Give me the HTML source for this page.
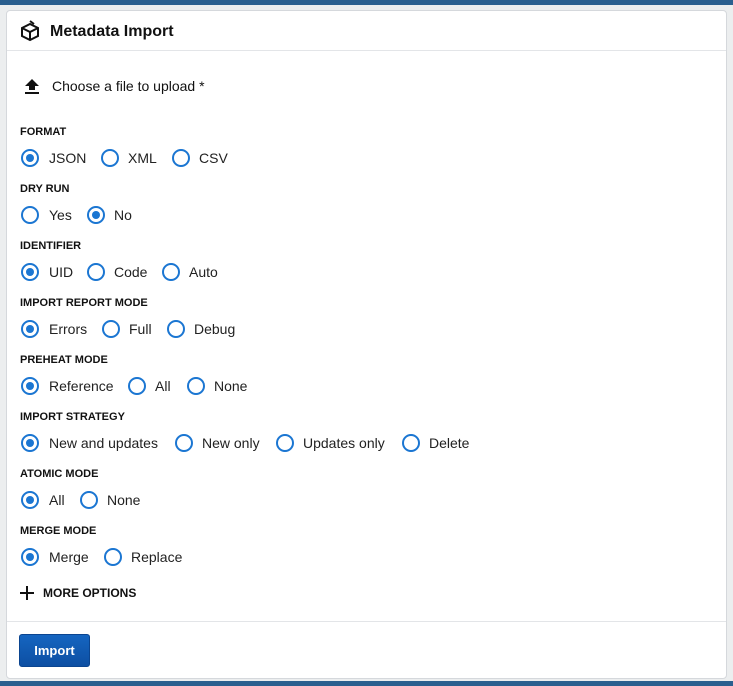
<!DOCTYPE html>
<html><head><style>
body{margin:0;width:733px;height:686px;background:#eceeef;position:relative;overflow:hidden;font-family:"Liberation Sans",Arial,sans-serif;color:#212934}
.top{position:absolute;left:0;top:0;width:733px;height:5px;background:#2a5f8f}
.bot{position:absolute;left:0;top:681px;width:733px;height:5px;background:#2a5f8f}
.card{position:absolute;left:6px;top:10px;width:719px;height:667px;background:#fff;border:1px solid #d5d8dc;border-radius:4px}
.hd{position:absolute;left:0;top:0;width:719px;height:39px;border-bottom:1px solid #e3e5e8}
.ft{position:absolute;left:0;top:610px;width:719px;border-top:1px solid #e3e5e8}
.t{position:absolute;white-space:nowrap}
.lbl{position:absolute;font-size:11px;font-weight:bold;color:#111;left:20px}
.r{position:absolute;width:14px;height:14px;border:2px solid #1b76d2;border-radius:50%;box-sizing:content-box}
.r.on::after{content:"";position:absolute;left:3px;top:3px;width:8px;height:8px;border-radius:50%;background:#1b76d2}
.o{position:absolute;font-size:14px;color:#222}
.btn{position:absolute;left:19px;top:634px;width:71px;height:33px;background:linear-gradient(#1565c0,#0d4fa3);border:1px solid #0b4590;border-radius:3px;color:#fff;font-size:13px;font-weight:bold;text-align:center;line-height:31px;box-sizing:border-box}
</style></head><body>
<div class="top"></div><div class="bot"></div>
<div class="card"><div class="hd"></div><div class="ft"></div></div>
<svg style="position:absolute;left:19px;top:20px" width="22" height="22" viewBox="0 0 22 22" fill="none" stroke="#111" stroke-width="2"><path d="M3 8 L11 4 L19 8 L19 16 L11 20 L3 16 Z M3 8 L11 12 L19 8 M11 12 V20"/><path d="M11 1 L15 4" /></svg>
<div class="t" style="left:50px;top:23px;font-size:16px;font-weight:bold;color:#111">Metadata Import</div>
<svg style="position:absolute;left:24px;top:78px" width="16" height="18" viewBox="0 0 16 18"><path d="M8 1 L15 8 H11 V12 H5 V8 H1 Z" fill="#111"/><rect x="1" y="14" width="14" height="2" fill="#111"/></svg>
<div class="t" style="left:52px;top:78px;font-size:14px;color:#111">Choose a file to upload *</div>

<div class="lbl" style="top:126px">FORMAT</div>
<div class="r on" style="left:21px;top:149px"></div><div class="o" style="left:49px;top:150px">JSON</div>
<div class="r" style="left:101px;top:149px"></div><div class="o" style="left:128px;top:150px">XML</div>
<div class="r" style="left:172px;top:149px"></div><div class="o" style="left:199px;top:150px">CSV</div>

<div class="lbl" style="top:183px">DRY RUN</div>
<div class="r" style="left:21px;top:206px"></div><div class="o" style="left:49px;top:207px">Yes</div>
<div class="r on" style="left:87px;top:206px"></div><div class="o" style="left:114px;top:207px">No</div>

<div class="lbl" style="top:240px">IDENTIFIER</div>
<div class="r on" style="left:21px;top:263px"></div><div class="o" style="left:49px;top:264px">UID</div>
<div class="r" style="left:87px;top:263px"></div><div class="o" style="left:114px;top:264px">Code</div>
<div class="r" style="left:162px;top:263px"></div><div class="o" style="left:189px;top:264px">Auto</div>

<div class="lbl" style="top:297px">IMPORT REPORT MODE</div>
<div class="r on" style="left:21px;top:320px"></div><div class="o" style="left:49px;top:321px">Errors</div>
<div class="r" style="left:102px;top:320px"></div><div class="o" style="left:129px;top:321px">Full</div>
<div class="r" style="left:167px;top:320px"></div><div class="o" style="left:194px;top:321px">Debug</div>

<div class="lbl" style="top:354px">PREHEAT MODE</div>
<div class="r on" style="left:21px;top:377px"></div><div class="o" style="left:49px;top:378px">Reference</div>
<div class="r" style="left:128px;top:377px"></div><div class="o" style="left:155px;top:378px">All</div>
<div class="r" style="left:187px;top:377px"></div><div class="o" style="left:214px;top:378px">None</div>

<div class="lbl" style="top:411px">IMPORT STRATEGY</div>
<div class="r on" style="left:21px;top:434px"></div><div class="o" style="left:49px;top:435px">New and updates</div>
<div class="r" style="left:175px;top:434px"></div><div class="o" style="left:202px;top:435px">New only</div>
<div class="r" style="left:276px;top:434px"></div><div class="o" style="left:303px;top:435px">Updates only</div>
<div class="r" style="left:402px;top:434px"></div><div class="o" style="left:429px;top:435px">Delete</div>

<div class="lbl" style="top:468px">ATOMIC MODE</div>
<div class="r on" style="left:21px;top:491px"></div><div class="o" style="left:49px;top:492px">All</div>
<div class="r" style="left:80px;top:491px"></div><div class="o" style="left:107px;top:492px">None</div>

<div class="lbl" style="top:525px">MERGE MODE</div>
<div class="r on" style="left:21px;top:548px"></div><div class="o" style="left:49px;top:549px">Merge</div>
<div class="r" style="left:104px;top:548px"></div><div class="o" style="left:131px;top:549px">Replace</div>

<svg style="position:absolute;left:20px;top:586px" width="14" height="14" viewBox="0 0 14 14"><path d="M7 0 V14 M0 7 H14" stroke="#111" stroke-width="2"/></svg>
<div class="t" style="left:43px;top:586px;font-size:12px;font-weight:bold;color:#111">MORE OPTIONS</div>
<div class="btn">Import</div>
</body></html>
